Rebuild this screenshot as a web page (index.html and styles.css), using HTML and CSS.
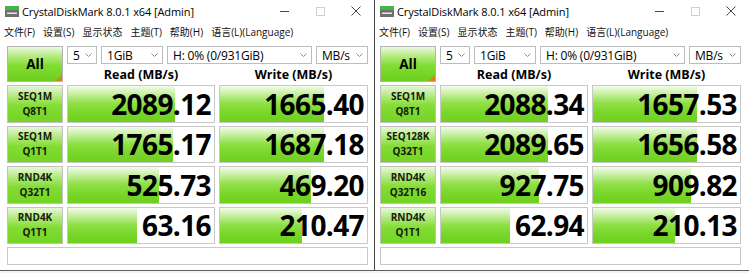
FILE: index.html
```html
<!DOCTYPE html>
<html lang="zh-CN">
<head>
<meta charset="UTF-8" />
<title>CrystalDiskMark 8.0.1 x64</title>
<link rel="stylesheet" href="styles.css">
</head>
<body>

<div class="screen">

  <!-- 左边窗口 -->
  <div class="win">
    <div class="titlebar">
      <svg class="icon" width="14" height="11" viewBox="0 0 14 11"><rect width="14" height="11" fill="#6e6e6e"/><rect width="14" height="4" fill="#43b549"/><rect x="2" y="6.5" width="10" height="1.5" fill="#e6e6e6"/></svg>
      <span class="title">CrystalDiskMark 8.0.1 x64 [Admin]</span>
      <div class="controls">
        <span class="ctl"><i class="min"></i></span>
        <span class="ctl"><i class="max"></i></span>
        <span class="ctl"><svg width="10" height="10" viewBox="0 0 10 10"><path d="M0.5 0.5 L9.5 9.5 M9.5 0.5 L0.5 9.5" stroke="#444" stroke-width="1"/></svg></span>
      </div>
    </div>
    <div class="menu">
      <span>文件(F)</span><span>设置(S)</span><span>显示状态</span><span>主题(T)</span><span>帮助(H)</span><span>语言(L)(Language)</span>
    </div>
    <div class="board">
      <div class="all">All</div>
      <div class="selects">
        <div class="sel s-count">5<svg width="7" height="4" viewBox="0 0 7 4"><path d="M0.5 0.5 L3.5 3.5 L6.5 0.5" fill="none" stroke="#888"/></svg></div>
        <div class="sel s-size">1GiB<svg width="7" height="4" viewBox="0 0 7 4"><path d="M0.5 0.5 L3.5 3.5 L6.5 0.5" fill="none" stroke="#888"/></svg></div>
        <div class="sel s-drive">H: 0% (0/931GiB)<svg width="7" height="4" viewBox="0 0 7 4"><path d="M0.5 0.5 L3.5 3.5 L6.5 0.5" fill="none" stroke="#888"/></svg></div>
        <div class="sel s-unit">MB/s<svg width="7" height="4" viewBox="0 0 7 4"><path d="M0.5 0.5 L3.5 3.5 L6.5 0.5" fill="none" stroke="#888"/></svg></div>
      </div>
      <div class="head">Read (MB/s)</div>
      <div class="head">Write (MB/s)</div>

      <div class="label">SEQ1M<br>Q8T1</div>
      <div class="cell"><div class="bar" style="width:73%"></div><span class="num">2089.12</span></div>
      <div class="cell"><div class="bar" style="width:71%"></div><span class="num">1665.40</span></div>

      <div class="label">SEQ1M<br>Q1T1</div>
      <div class="cell"><div class="bar" style="width:72%"></div><span class="num">1765.17</span></div>
      <div class="cell"><div class="bar" style="width:71%"></div><span class="num">1687.18</span></div>

      <div class="label">RND4K<br>Q32T1</div>
      <div class="cell"><div class="bar" style="width:62%"></div><span class="num">525.73</span></div>
      <div class="cell"><div class="bar" style="width:62%"></div><span class="num">469.20</span></div>

      <div class="label">RND4K<br>Q1T1</div>
      <div class="cell"><div class="bar" style="width:47%"></div><span class="num">63.16</span></div>
      <div class="cell"><div class="bar" style="width:56%"></div><span class="num">210.47</span></div>

      <div class="comment"></div>
    </div>
  </div>

  <!-- 右边窗口 -->
  <div class="win">
    <div class="titlebar">
      <svg class="icon" width="14" height="11" viewBox="0 0 14 11"><rect width="14" height="11" fill="#6e6e6e"/><rect width="14" height="4" fill="#43b549"/><rect x="2" y="6.5" width="10" height="1.5" fill="#e6e6e6"/></svg>
      <span class="title">CrystalDiskMark 8.0.1 x64 [Admin]</span>
      <div class="controls">
        <span class="ctl"><i class="min"></i></span>
        <span class="ctl"><i class="max"></i></span>
        <span class="ctl"><svg width="10" height="10" viewBox="0 0 10 10"><path d="M0.5 0.5 L9.5 9.5 M9.5 0.5 L0.5 9.5" stroke="#444" stroke-width="1"/></svg></span>
      </div>
    </div>
    <div class="menu">
      <span>文件(F)</span><span>设置(S)</span><span>显示状态</span><span>主题(T)</span><span>帮助(H)</span><span>语言(L)(Language)</span>
    </div>
    <div class="board">
      <div class="all">All</div>
      <div class="selects">
        <div class="sel s-count">5<svg width="7" height="4" viewBox="0 0 7 4"><path d="M0.5 0.5 L3.5 3.5 L6.5 0.5" fill="none" stroke="#888"/></svg></div>
        <div class="sel s-size">1GiB<svg width="7" height="4" viewBox="0 0 7 4"><path d="M0.5 0.5 L3.5 3.5 L6.5 0.5" fill="none" stroke="#888"/></svg></div>
        <div class="sel s-drive">H: 0% (0/931GiB)<svg width="7" height="4" viewBox="0 0 7 4"><path d="M0.5 0.5 L3.5 3.5 L6.5 0.5" fill="none" stroke="#888"/></svg></div>
        <div class="sel s-unit">MB/s<svg width="7" height="4" viewBox="0 0 7 4"><path d="M0.5 0.5 L3.5 3.5 L6.5 0.5" fill="none" stroke="#888"/></svg></div>
      </div>
      <div class="head">Read (MB/s)</div>
      <div class="head">Write (MB/s)</div>

      <div class="label">SEQ1M<br>Q8T1</div>
      <div class="cell"><div class="bar" style="width:73%"></div><span class="num">2088.34</span></div>
      <div class="cell"><div class="bar" style="width:71%"></div><span class="num">1657.53</span></div>

      <div class="label">SEQ128K<br>Q32T1</div>
      <div class="cell"><div class="bar" style="width:73%"></div><span class="num">2089.65</span></div>
      <div class="cell"><div class="bar" style="width:71%"></div><span class="num">1656.58</span></div>

      <div class="label">RND4K<br>Q32T16</div>
      <div class="cell"><div class="bar" style="width:67%"></div><span class="num">927.75</span></div>
      <div class="cell"><div class="bar" style="width:67%"></div><span class="num">909.82</span></div>

      <div class="label">RND4K<br>Q1T1</div>
      <div class="cell"><div class="bar" style="width:47%"></div><span class="num">62.94</span></div>
      <div class="cell"><div class="bar" style="width:56%"></div><span class="num">210.13</span></div>

      <div class="comment"></div>
    </div>
  </div>

</div>

</body>
</html>
```

FILE: styles.css
```css
body {
  margin: 0;
  background: #fff;
  color: #000;
  font-family: 'Open Sans', 'Noto Sans CJK SC', sans-serif;
  overflow: hidden;
}
.screen {
  display: flex;
  width: 749px;
  height: 273px;
  background: #f4f4f4;
}
.win {
  width: 374px;
  height: 271px;
  background: #fff;
  border-bottom: 1px solid #5e5e5e;
  box-sizing: border-box;
}
.win:first-child {
  width: 375px;
  border-right: 1px solid #4a4a4a;
}
.titlebar {
  height: 22px;
  display: flex;
  align-items: center;
}
.icon {
  margin: 0 3px 0 5px;
}
.title {
  font-size: 11px;
  letter-spacing: -0.1px;
}
.controls {
  margin-left: auto;
  display: flex;
  height: 22px;
}
.ctl {
  width: 36px;
  display: flex;
  align-items: center;
  justify-content: center;
}
.min {
  display: block;
  width: 9px;
  height: 1px;
  background: #444;
}
.max {
  display: block;
  width: 7px;
  height: 7px;
  border: 1px solid #d0d0d0;
}
.menu {
  height: 18px;
  display: flex;
  align-items: center;
  gap: 8px;
  padding-left: 4px;
  font-size: 10px;
  color: #111;
}
.board {
  display: grid;
  grid-template-columns: 56px 148px 149px;
  grid-template-rows: 18px 15px repeat(4, 37.5px) 18px;
  column-gap: 4px;
  row-gap: 3px;
  padding: 6px 0 0 7px;
}
.win + .win .board {
  padding-left: 5px;
}
.all {
  grid-row: 1 / 3;
  position: relative;
  display: flex;
  align-items: center;
  justify-content: center;
  font-size: 13.5px;
  font-weight: 700;
  border: 1px solid #b5b5b5;
  background: linear-gradient(#eef9e4 0%, #b8ec86 25%, #82dc32 55%, #6ccf1c 100%);
}
.all::after {
  content: '';
  position: absolute;
  right: 0;
  bottom: 0;
  border-style: solid;
  border-width: 0 0 6px 6px;
  border-color: transparent transparent #e8781c transparent;
}
.selects {
  grid-column: 2 / 4;
  display: flex;
  gap: 4px;
}
.sel {
  height: 18px;
  box-sizing: border-box;
  border: 1px solid #bcbcbc;
  display: flex;
  align-items: center;
  justify-content: space-between;
  padding: 0 4px 0 5px;
  font-size: 12px;
  letter-spacing: -0.2px;
}
.s-count { width: 30px; }
.s-size { width: 62px; }
.s-drive { width: 145px; }
.s-unit { flex: 1; }
.head {
  font-size: 12.5px;
  font-weight: 700;
  text-align: center;
  line-height: 15px;
}
.label {
  display: flex;
  align-items: center;
  justify-content: center;
  text-align: center;
  font-size: 10px;
  font-weight: 700;
  line-height: 15px;
  color: #14200a;
  border: 1px solid #c2c2c2;
  background: linear-gradient(#e8f7da 0%, #b3ea80 28%, #84dc34 55%, #74d424 100%);
}
.cell {
  position: relative;
  display: flex;
  align-items: center;
  justify-content: flex-end;
  padding-right: 3px;
  border: 1px solid #c8c8c8;
  background: #fff;
}
.bar {
  position: absolute;
  left: 0;
  top: 0;
  bottom: 0;
  background: linear-gradient(#f3fbec 0%, #c6efa0 22%, #8fe046 48%, #78d628 75%, #6ed01e 100%);
}
.num {
  position: relative;
  font-size: 28px;
  font-weight: 700;
  line-height: 1;
  letter-spacing: -0.6px;
}
.comment {
  grid-column: 1 / 4;
  border: 1px solid #c8c8c8;
  background: #fff;
}
```
